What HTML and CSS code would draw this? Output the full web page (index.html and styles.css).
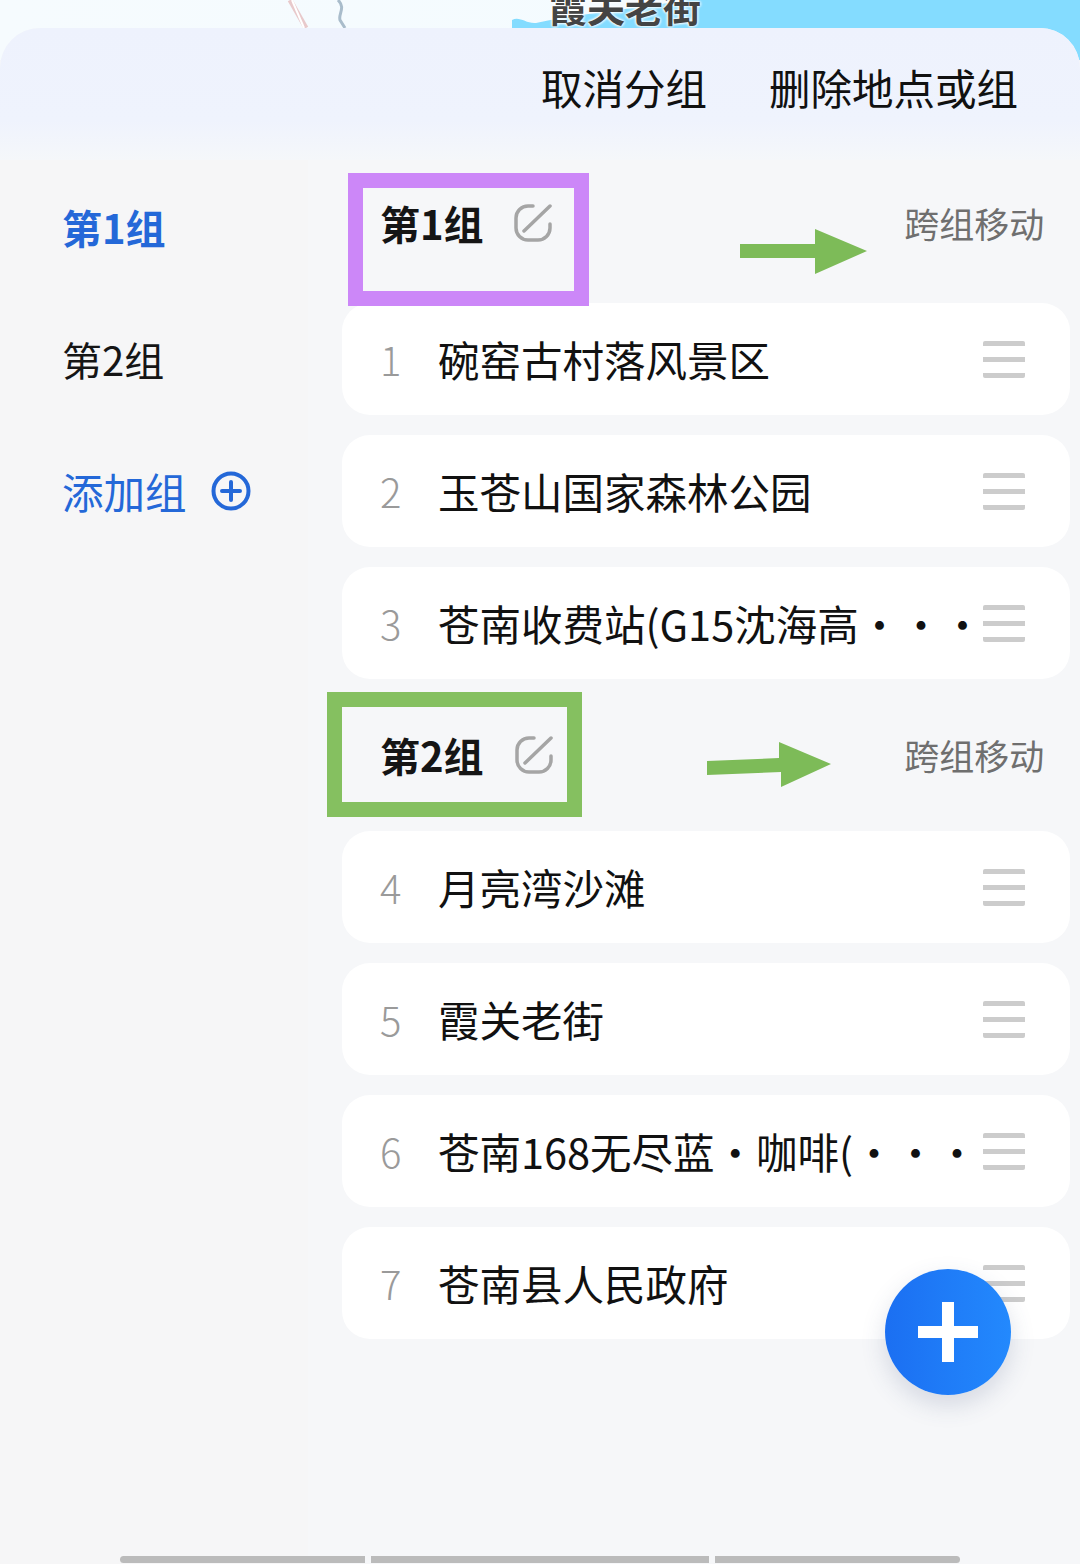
FILE: index.html
```html
<!DOCTYPE html>
<html lang="zh-CN">
<head>
<meta charset="utf-8">
<title>分组</title>
<link rel="stylesheet" href="styles.css">
</head>
<body>
<div class="page">
	<!-- map peeking out above the sheet -->
	<div class="map">
		<svg class="map-art" width="1080" height="60" viewBox="0 0 1080 60">
			<path d="M290 0 L306 28" stroke="#e8c9cb" stroke-width="5" fill="none"/>
			<path d="M292 0 L304 28" stroke="#fff" stroke-width="2" fill="none"/>
			<path d="M338 0 C346 8 338 14 340 20 L345 28" stroke="#a9bccb" stroke-width="3" fill="none"/>
			<path d="M512 20 C520 16 526 24 536 23 L560 18 L690 0 H1080 V60 H512 Z" fill="#84dcff"/>
		</svg>
		<span class="map-label">霞关老街</span>
	</div>

	<div class="sheet">
		<div class="sheet-head">
			<a class="head-btn">取消分组</a>
			<a class="head-btn">删除地点或组</a>
		</div>

		<div class="sheet-body">
			<div class="side">
				<div class="side-item active">第1组</div>
				<div class="side-item">第2组</div>
				<div class="side-item add">添加组
					<svg width="40" height="40" viewBox="0 0 40 40"><circle cx="20" cy="20" r="17.5" fill="none" stroke="#2468d8" stroke-width="4"/><path d="M20 11V29M11 20H29" stroke="#2468d8" stroke-width="4" stroke-linecap="round"/></svg>
				</div>
			</div>

			<div class="groups">
				<div class="group-head first">
					<span class="group-title">第1组</span>
					<svg class="edit" width="38" height="38" viewBox="0 0 38 38"><path d="M19 2H14A12 12 0 0 0 2 14V24A12 12 0 0 0 14 36H24A12 12 0 0 0 36 24V20" fill="none" stroke="#a5a5a5" stroke-width="3.5" stroke-linecap="round"/><path d="M10 27L36 2" stroke="#a5a5a5" stroke-width="3.5" stroke-linecap="round"/></svg>
					<span class="group-move">跨组移动</span>
				</div>
				<div class="row"><span class="num">1</span><span class="name">碗窑古村落风景区</span><i class="grip"></i></div>
				<div class="row"><span class="num">2</span><span class="name">玉苍山国家森林公园</span><i class="grip"></i></div>
				<div class="row"><span class="num">3</span><span class="name">苍南收费站(G15沈海高···</span><i class="grip"></i></div>

				<div class="group-head">
					<span class="group-title">第2组</span>
					<svg class="edit" width="38" height="38" viewBox="0 0 38 38"><path d="M19 2H14A12 12 0 0 0 2 14V24A12 12 0 0 0 14 36H24A12 12 0 0 0 36 24V20" fill="none" stroke="#a5a5a5" stroke-width="3.5" stroke-linecap="round"/><path d="M10 27L36 2" stroke="#a5a5a5" stroke-width="3.5" stroke-linecap="round"/></svg>
					<span class="group-move">跨组移动</span>
				</div>
				<div class="row"><span class="num">4</span><span class="name">月亮湾沙滩</span><i class="grip"></i></div>
				<div class="row"><span class="num">5</span><span class="name">霞关老街</span><i class="grip"></i></div>
				<div class="row"><span class="num">6</span><span class="name">苍南168无尽蓝·咖啡(···</span><i class="grip"></i></div>
				<div class="row"><span class="num">7</span><span class="name">苍南县人民政府</span><i class="grip"></i></div>
			</div>
		</div>

		<div class="scrollbar"><i class="seg-a"></i><i class="seg-b"></i><i class="seg-c"></i></div>
	</div>

	<!-- hand drawn marks on top of the list -->
	<div class="mark mark-purple"></div>
	<div class="mark mark-green"></div>
	<svg class="arrow arrow-a" width="130" height="46" viewBox="0 0 130 46"><path d="M0 15H75V0L127 22L75 45V29H0Z" fill="#7dbb58"/></svg>
	<svg class="arrow arrow-b" width="126" height="46" viewBox="0 0 126 46"><path d="M0 19L72 16V0L124 22L74 45V30L0 33Z" fill="#7dbb58"/></svg>

	<div class="fab"><i></i></div>
</div>
</body>
</html>
```

FILE: styles.css
```css
*{
	box-sizing:border-box;
}
body{
	margin:0;
	background:#f6f7f9;
	font-family:"Noto Sans CJK SC","Noto Sans",sans-serif;
	color:#151515;
}
.page{
	position:relative;
	width:1080px;
	height:1564px;
	overflow:hidden;
	display:flex;
	flex-direction:column;
}

/* map strip */
.map{
	position:relative;
	flex:none;
	height:60px;
	margin-bottom:-32px;
	background:linear-gradient(90deg,#f6fbfe,#f3fbff);
}
.map-art{
	display:block;
}
.map-label{
	position:absolute;
	left:549px;
	top:-20px;
	font-size:38px;
	line-height:52px;
	font-weight:700;
	color:#444;
	text-shadow:0 0 3px #fff,0 0 3px #fff,0 0 3px #fff;
}

/* sheet */
.sheet{
	position:relative;
	flex:1;
	display:flex;
	flex-direction:column;
	border-radius:40px 40px 0 0;
	background:#f6f7f9;
	overflow:hidden;
}
.sheet-head{
	flex:none;
	height:132px;
	padding:0 62px 14px 0;
	display:flex;
	justify-content:flex-end;
	align-items:center;
	gap:62px;
	background:linear-gradient(180deg,#eef2fd 0%,#eff3fd 70%,#f5f7fa 100%);
}
.head-btn{
	font-size:41.5px;
	line-height:56px;
	color:#111;
}
.sheet-body{
	flex:1;
	display:flex;
}

/* left column */
.side{
	flex:none;
	width:308px;
	background:#f6f6f7;
	padding-top:1px;
}
.side-item{
	height:132px;
	padding-left:62px;
	display:flex;
	align-items:center;
	gap:24px;
	font-size:40px;
}
.side-item.active{
	font-weight:700;
	color:#2468d8;
}
.side-item.add{
	font-size:41.5px;
	color:#2468d8;
}

/* right column */
.groups{
	flex:1;
	padding:0 36px 0 34px;
}
.group-head{
	height:152px;
	padding:0 26px 0 38px;
	display:flex;
	align-items:center;
}
.group-head.first{
	height:143px;
	padding-bottom:18px;
}
.group-title{
	font-size:40px;
	font-weight:700;
	line-height:56px;
}
.group-head .edit{
	margin-left:30px;
}
.group-head:not(.first) .edit{
	margin-left:31px;
}
.group-move{
	margin-left:auto;
	font-size:35px;
	line-height:50px;
	color:#6f6f6f;
}
.row{
	height:112px;
	margin-bottom:20px;
	padding:0 45px 0 38px;
	display:flex;
	align-items:center;
	background:#fff;
	border-radius:28px;
}
.row:has(+ .group-head){
	margin-bottom:0;
}
.num{
	flex:none;
	width:58px;
	font-size:40px;
	font-weight:300;
	color:#9a9a9a;
}
.name{
	flex:1;
	font-size:41.5px;
	line-height:56px;
	color:#111;
	white-space:nowrap;
}
.grip{
	flex:none;
	width:42px;
	height:37px;
	border-top:5px solid #ccc;
	border-bottom:5px solid #ccc;
	background:linear-gradient(#ccc,#ccc) center/100% 5px no-repeat;
	border-radius:2px;
}

/* bottom scroll indicator */
.scrollbar{
	position:absolute;
	left:120px;
	bottom:1px;
	display:flex;
	gap:6px;
}
.scrollbar i{
	display:block;
	height:7px;
	background:#bbb;
}
.seg-a{
	width:245px;
	border-radius:4px 0 0 4px;
}
.seg-b{
	width:338px;
}
.seg-c{
	width:245px;
	border-radius:0 4px 4px 0;
}

/* marks over the list */
.mark{
	position:absolute;
	border-style:solid;
	border-width:15px;
}
.mark-purple{
	left:348px;
	top:173px;
	width:241px;
	height:133px;
	border-color:#cc87f8;
}
.mark-green{
	left:327px;
	top:692px;
	width:255px;
	height:125px;
	border-color:#85c060;
}
.arrow{
	position:absolute;
}
.arrow-a{
	left:740px;
	top:229px;
}
.arrow-b{
	left:707px;
	top:742px;
}

/* floating add button */
.fab{
	position:absolute;
	left:885px;
	top:1269px;
	width:126px;
	height:126px;
	border-radius:50%;
	background:linear-gradient(90deg,#1b6ff2,#2389fd);
	box-shadow:0 10px 24px rgba(60,80,120,.18);
	display:flex;
	align-items:center;
	justify-content:center;
}
.fab i{
	display:block;
	width:60px;
	height:60px;
	background:
		linear-gradient(#fff,#fff) center/100% 12px no-repeat,
		linear-gradient(#fff,#fff) center/12px 100% no-repeat;
	border-radius:6px;
}
```
